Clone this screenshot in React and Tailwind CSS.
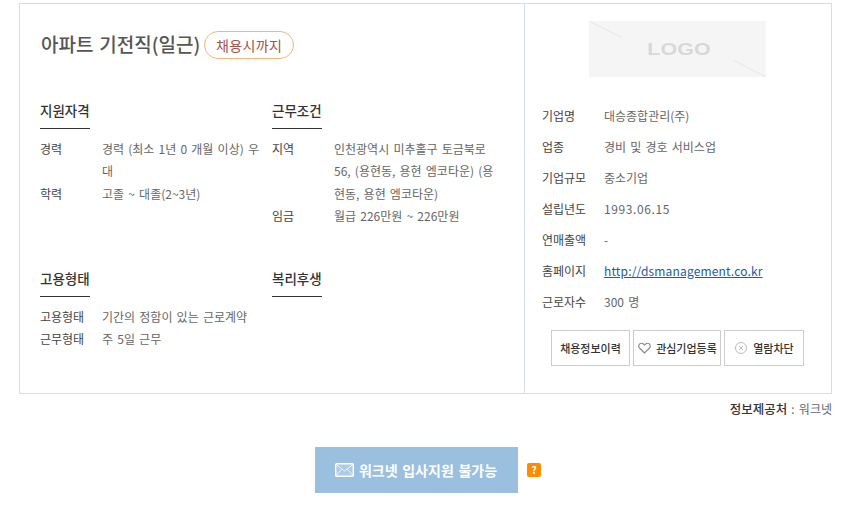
function Section({ title, rows, className }) {
  return (
    <div className={className}>
      <h3 className="w-[50px] h-[33px] border-b border-[#333] text-[13.5px] leading-[28px] whitespace-nowrap font-medium text-[#333]">{title}</h3>
      <dl className="mt-[8.5px]">
        {rows.map((r) => (
          <div key={r[0]} className="flex text-[12px] leading-[22.5px]">
            <dt className="w-[62px] shrink-0 text-[#444]">{r[0]}</dt>
            <dd className="text-[#666] w-[162px]">{r[1]}</dd>
          </div>
        ))}
      </dl>
    </div>
  );
}

const company = [
  ["기업명", "대승종합관리(주)"],
  ["업종", "경비 및 경호 서비스업"],
  ["기업규모", "중소기업"],
  ["설립년도", <span className="tracking-[0.6px]">1993.06.15</span>],
  ["연매출액", "-"],
  ["홈페이지", <a href="#" className="text-[#1a5c9e] underline tracking-[0.16px]">http://dsmanagement.co.kr</a>],
  ["근로자수", "300 명"],
];

export default function App() {
  return (
    <div className="w-[853px] h-[510px] bg-white pt-[3px] pl-[19px] overflow-hidden [word-spacing:1.5px] [font-family:'Noto_Sans_CJK_KR','Noto_Sans',sans-serif]">
      <div className="w-[813px] h-[391px] border border-[#d5dde5] flex">
        <div className="w-[505px] h-full pl-[20px] border-r border-[#d5dde5]">
          <div className="flex items-center h-[28px] mt-[27px] pl-[1px]">
            <h2 className="text-[19px] leading-[28px] pb-[2px] font-medium text-[#555]">아파트 기전직(일근)</h2>
            <span className="ml-[4px] w-[90px] h-[28px] flex items-center justify-center rounded-full border border-[#f8b27c] text-[14px] tracking-[0.4px] text-[#a0524a]">채용시까지</span>
          </div>
          <div className="grid grid-cols-[232px_232px] mt-[37px]">
            <Section className="h-[168px]" title="지원자격" rows={[["경력", "경력 (최소 1년 0 개월 이상) 우대"], ["학력", "고졸 ~ 대졸(2~3년)"]]} />
            <Section className="h-[168px]" title="근무조건" rows={[["지역", "인천광역시 미추홀구 토금북로 56, (용현동, 용현 엠코타운) (용현동, 용현 엠코타운)"], ["임금", "월급 226만원 ~ 226만원"]]} />
            <Section title="고용형태" rows={[["고용형태", "기간의 정함이 있는 근로계약"], ["근무형태", "주 5일 근무"]]} />
            <Section title="복리후생" rows={[]} />
          </div>
        </div>
        <div className="flex-1 flex flex-col pt-[17px] pl-[17px]">
          <div className="ml-[47px] w-[177px] h-[56px] bg-[#f5f5f5] relative flex items-center justify-center overflow-hidden">
            <svg className="absolute inset-0" width="177" height="56" viewBox="0 0 177 56">
              <path d="M0 0 L32 16 M144 39 L177 56" stroke="#e6e6e6" strokeWidth="1" fill="none" />
            </svg>
            <span className="text-[16px] pt-[2px] pl-[3px] font-bold text-[#d8d8d8] [font-family:'Liberation_Sans',sans-serif] scale-x-[1.35] blur-[0.5px]">LOGO</span>
          </div>
          <dl className="mt-[23px]">
            {company.map((c) => (
              <div key={c[0]} className="flex h-[31px] items-center text-[12px]">
                <dt className="w-[62px] text-[#444]">{c[0]}</dt>
                <dd className="text-[#666]">{c[1]}</dd>
              </div>
            ))}
          </dl>
          <div className="flex gap-[3px] ml-[9px] mt-[13px]">
            <button className="w-[79px] h-[36px] border border-[#ccc] text-[11px] font-medium text-[#333]">채용정보이력</button>
            <button className="w-[88px] h-[36px] border border-[#ccc] text-[11px] font-medium text-[#333] flex items-center justify-center gap-[5px]">
              <svg className="ml-[1px]" width="13" height="12" viewBox="0 0 13 12" fill="none" stroke="#888" strokeWidth="1.1">
                <path d="M6.5 11 L1.5 6 C0 4.3 .8 1.2 3.5 1.2 C5 1.2 6 2.2 6.5 3 C7 2.2 8 1.2 9.5 1.2 C12.2 1.2 13 4.3 11.5 6 Z" />
              </svg>
              관심기업등록
            </button>
            <button className="w-[80px] h-[36px] border border-[#ccc] text-[11px] font-medium text-[#333] flex items-center justify-center gap-[6px] pl-[1px]">
              <svg width="12" height="12" viewBox="0 0 12 12" fill="none" stroke="#bbb">
                <circle cx="6" cy="6" r="5.5" />
                <path d="M4 4 L8 8 M8 4 L4 8" />
              </svg>
              열람차단
            </button>
          </div>
        </div>
      </div>
      <p className="w-[813px] text-right text-[12px] leading-[18px] mt-[6px] text-[#666]"><b className="font-medium text-[#333] text-[12.5px]">정보제공처</b> : 워크넷</p>
      <div className="flex items-center mt-[29px] ml-[296px]">
        <div className="w-[203px] h-[46px] bg-[#9abfdf] flex items-center justify-center gap-[5px] pr-[1px] text-[14px] font-bold text-white">
          <svg width="19" height="14" viewBox="0 0 19 14" fill="#ffffff33" stroke="white" strokeWidth="1.4">
            <rect x="0.7" y="0.7" width="17.6" height="12.6" rx="1" />
            <path d="M1 1.5 L9.5 8 L18 1.5 M1 12.5 L6.5 6.5 M18 12.5 L12.5 6.5" strokeWidth="0.8" fill="none" />
          </svg>
          워크넷 입사지원 불가능
        </div>
        <span className="ml-[9px] w-[14px] h-[14px] rounded-[2px] bg-[#ff8c00] text-white text-[10px] font-bold leading-[14px] text-center">?</span>
      </div>
    </div>
  );
}
